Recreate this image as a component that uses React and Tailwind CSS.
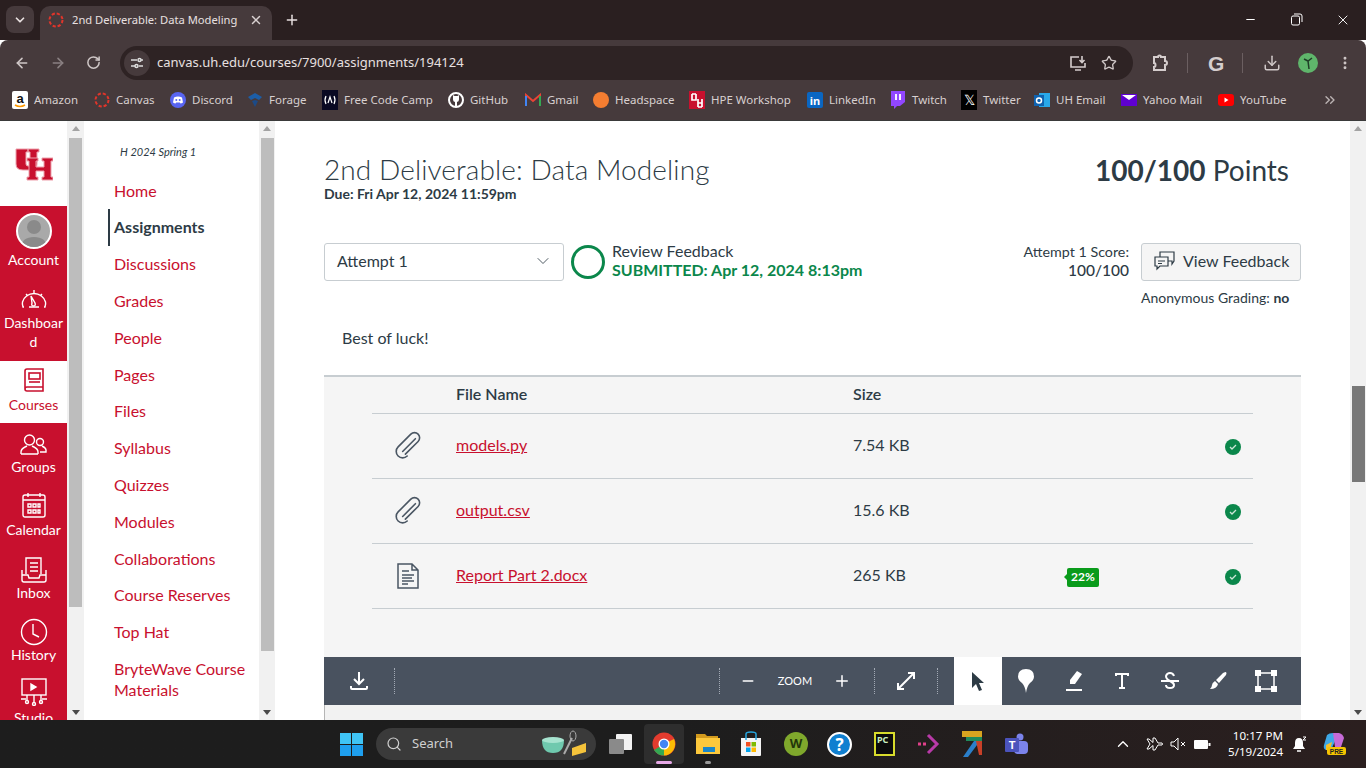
import React from "react";
import { ArrowLeft, ArrowRight, RotateCw, Star, Download, X, Plus, ChevronDown, ChevronsRight, ChevronUp, Search, Minus, EllipsisVertical } from "lucide-react";

const Canvas = ({ s = 16 }) => (
  <svg width={s} height={s} viewBox="0 0 16 16" className="shrink-0">
    <circle cx="8" cy="8" r="6.5" fill="none" stroke="#e0352b" strokeWidth="2" strokeDasharray="3.2 1.9" />
  </svg>
);

const Clip = () => (
  <svg width="36" height="36" viewBox="0 0 28 28" fill="none" stroke="#4a5663" strokeWidth="1.250" strokeLinecap="round">
    <g transform="translate(1.5 0) rotate(45 14 14)">
      <path d="M17 9v14M17 9a4 4 0 0 0-8 0v14a5 5 0 0 0 10 0" transform="translate(-1 -2)" />
      <path d="M13 9v14" transform="translate(0 -2)" />
    </g>
  </svg>
);

const bookmarks = [
  { w: "w-[82px]", t: "Amazon", i: <svg width="16" height="18" viewBox="0 0 16 18"><rect width="16" height="18" rx="2" fill="#fff" /><text x="8" y="12" fontSize="13" fontWeight="700" textAnchor="middle" fill="#111" fontFamily="Liberation Sans">a</text><path d="M3 14q5 3 10 0" stroke="#f90" strokeWidth="1.6" fill="none" /></svg> },
  { w: "w-[76px]", t: "Canvas", i: <Canvas /> },
  { w: "w-[77px]", t: "Discord", i: <svg width="16" height="16" viewBox="0 0 16 16"><circle cx="8" cy="8" r="8" fill="#5865f2" /><path d="M4 5.5q4-1.800 8 0l1 5q-1.500 1-2.500 1l-.7-1h-3.600l-.7 1q-1 0-2.500-1z" fill="#fff" /><circle cx="6.300" cy="8" r="1" fill="#5865f2" /><circle cx="9.700" cy="8" r="1" fill="#5865f2" /></svg> },
  { w: "w-[75px]", t: "Forage", i: <svg width="16" height="16" viewBox="0 0 16 16"><path d="M1 5l7-4 7 4-3 3-4-2-4 2z" fill="#1c5ea8" /><path d="M5 9l3-1 3 1-3 6z" fill="#1c4a86" /></svg> },
  { w: "w-[126px]", t: "Free Code Camp", i: <svg width="16" height="20" viewBox="0 0 16 20"><rect width="16" height="20" fill="#0a0a23" /><path d="M4 6q-2 4 0 8M12 6q2 4 0 8M6 13l2-6 2 6" stroke="#fff" fill="none" strokeWidth="1.200" /></svg> },
  { w: "w-[77px]", t: "GitHub", i: <svg width="16" height="16" viewBox="0 0 16 16"><circle cx="8" cy="8" r="7" fill="none" stroke="#fff" strokeWidth="2" /><path d="M5 3l1.500 1h3L11 3v4.500q0 2-2 2.500v4H7v-4q-2-.5-2-2.500z" fill="#fff" /></svg> },
  { w: "w-[68px]", t: "Gmail", i: <svg width="16" height="14" viewBox="0 0 16 14"><path d="M1 13V2l7 6 7-6v11" fill="none" stroke="#ea4335" strokeWidth="2" /><path d="M1 13V3" stroke="#4285f4" strokeWidth="2" /><path d="M15 13V3" stroke="#34a853" strokeWidth="2" /></svg> },
  { w: "w-[96px]", t: "Headspace", i: <span className="block h-4 w-4 rounded-full bg-[#f47d31]" /> },
  { w: "w-[118px]", t: "HPE Workshop", i: <svg width="16" height="18" viewBox="0 0 16 18"><rect width="16" height="18" fill="#c8102e" /><path d="M3 3v6h4V3M9 8v8M13 8v8M9 12h4M3 3h4M9 16h4" stroke="#fff" strokeWidth="1.700" fill="none" /></svg> },
  { w: "w-[83px]", t: "LinkedIn", i: <span className="flex h-4 w-4 items-center justify-center rounded-[2px] bg-[#0a66c2] text-[11px] font-bold leading-none text-white">in</span> },
  { w: "w-[71px]", t: "Twitch", i: <svg width="16" height="20" viewBox="0 0 16 20"><path d="M1 1h14v11l-5 4H7l-3 3v-3H1z" fill="#9146ff" /><path d="M6 4v6M10 4v6" stroke="#fff" strokeWidth="1.800" /></svg> },
  { w: "w-[73px]", t: "Twitter", i: <span className="flex h-5 w-4 items-center justify-center bg-black text-[14px] leading-none text-white">𝕏</span> },
  { w: "w-[87px]", t: "UH Email", i: <svg width="16" height="20" viewBox="0 0 16 20"><rect x="5" y="3" width="11" height="14" fill="#28a8ea" /><rect y="5" width="10" height="11" fill="#0f62b0" /><circle cx="5" cy="10.500" r="2.500" fill="none" stroke="#fff" strokeWidth="1.500" /></svg> },
  { w: "w-[97px]", t: "Yahoo Mail", i: <svg width="16" height="14" viewBox="0 0 16 14"><rect y="1" width="16" height="12" fill="#5f01d1" /><path d="M1 2l7 5 7-5z" fill="#fff" /></svg> },
  { w: "w-[94px]", t: "YouTube", i: <svg width="16" height="14" viewBox="0 0 16 14"><rect y="1" width="16" height="12" rx="3" fill="#f00" /><path d="M6.500 4.500L10.500 7l-4 2.500z" fill="#fff" /></svg> },
];

function TabStrip() {
  return (
    <div className="flex h-10 items-start bg-[#2a1f20] text-[#e8e0e0]">
      <div className="ml-[6px] mt-[6px] flex h-[27px] w-[28px] items-center justify-center rounded-lg bg-[#463a3c]">
        <ChevronDown size={14} strokeWidth={3} />
      </div>
      <div className="ml-[6px] mt-[6px] flex h-[34px] w-[232px] items-center rounded-t-[10px] bg-[#463a3c] pb-[6px] pl-2 pr-2">
        <Canvas />
        <span className="ml-2 whitespace-nowrap text-[11.200px]">2nd Deliverable: Data Modeling</span>
        <X size={14} strokeWidth={2.5} className="ml-auto mr-[1px] text-[#d8d0d0]" />
      </div>
      <Plus size={16} strokeWidth={2.2} className="ml-3 mt-3" />
      <div className="ml-auto flex">
        <div className="mt-[13px] flex w-[45px] justify-center"><Minus size={13} className="text-white" /></div>
        <div className="mt-[13px] flex w-[46px] justify-center">
          <svg width="13" height="13" viewBox="0 0 13 13" fill="none" stroke="#fff"><rect x="1.500" y="3" width="8" height="9" rx="1.500" /><path d="M4 1h6q2 0 2 2v6" /></svg>
        </div>
        <div className="mt-[12px] flex w-[47px] justify-center"><X size={16} strokeWidth={1.4} className="text-white" /></div>
      </div>
    </div>
  );
}

function Toolbar() {
  return (
    <div className="flex h-10 items-center rounded-t-lg bg-[#463a3c] pt-[6px] text-[#cfc7c7]">
      <div className="flex w-[120px] pl-[14px]">
        <ArrowLeft size={16} strokeWidth={2.4} />
        <ArrowRight size={16} strokeWidth={2.4} className="ml-5 text-[#8a8082]" />
        <RotateCw size={15} strokeWidth={2.4} className="ml-5" />
      </div>
      <div className="flex h-[34px] w-[1013px] items-center rounded-full bg-[#2e2324] pl-1 pr-4">
        <div className="flex h-[26px] w-[26px] items-center justify-center rounded-full bg-[#463a3c]">
          <svg width="14" height="14" viewBox="0 0 14 14" fill="none" stroke="#ddd" strokeWidth="1.500"><path d="M1 4h6M1 10h4M11 4h2M9 10h4" /><circle cx="9.500" cy="4" r="1.500" /><circle cx="6.500" cy="10" r="1.500" /></svg>
        </div>
        <span className="ml-[7px] text-[13px] text-[#e8e0e0]">canvas.uh.edu/courses/7900/assignments/194124</span>
        <div className="ml-auto flex items-center gap-[14px]">
          <svg width="18" height="18" viewBox="0 0 18 18" fill="none" stroke="#d5cdcd" strokeWidth="1.600"><path d="M10 3H2v10h14V9M6 16h6M13 2v6M10.500 6l2.500 2.500L15.500 6" /></svg>
          <Star size={16} strokeWidth={2} />
        </div>
      </div>
      <div className="flex items-center">
        <div className="ml-[18px] flex w-[18px] justify-center">
          <svg width="18" height="18" viewBox="0 0 18 18" fill="none" stroke="#d5cdcd" strokeWidth="2"><path d="M3 3h4q0-1.500 1.500-1.500T10 3h4v4q2 0 2 2t-2 2v5H3v-3q1.500 0 1.500-2T3 9z" /></svg>
        </div>
        <div className="ml-[18px] h-5 w-[1px] bg-[#6b5f61]" />
        <span className="ml-[20px] w-[18px] text-[21px] font-bold leading-none text-[#d5cdcd] [font-family:'Liberation_Sans',sans-serif]">G</span>
        <div className="ml-[16px] h-5 w-[1px] bg-[#6b5f61]" />
        <Download size={18} strokeWidth={2} className="ml-[20px]" />
        <div className="ml-[17px] flex h-[20px] w-[20px] items-center justify-center rounded-full bg-[#5fb56b]">
          <svg width="12" height="14" viewBox="0 0 12 14" fill="none" stroke="#1f3d27" strokeWidth="1.500"><path d="M2 3l4 2 4-3M6 5l1 8" /></svg>
        </div>
        <EllipsisVertical size={16} strokeWidth={2.4} className="ml-[19px]" />
      </div>
    </div>
  );
}

function Bookmarks() {
  return (
    <div className="flex h-10 items-center bg-[#463a3c] pl-3 text-[11.500px] text-[#d8d0d0]">
      {bookmarks.map((b) => (
        <div key={b.t} className={"flex items-center gap-[6px] whitespace-nowrap " + b.w}>
          <span className="flex w-4 shrink-0 items-center justify-center">{b.i}</span>
          <span>{b.t}</span>
        </div>
      ))}
      <ChevronsRight size={16} className="ml-[10px] text-[#bcb4b4]" />
    </div>
  );
}

const NavItem = ({ h, red, icon, children }) => (
  <div className={"flex shrink-0 flex-col items-center text-center text-[14px] leading-[19px] " + h + " " + (red ? "bg-[#c8102e] text-white" : "bg-white text-[#c8102e]")}>
    {icon}
    <span>{children}</span>
  </div>
);

const ScrollBar = ({ w, thumbTop, thumbH, bottomCls }) => (
  <div className={"flex shrink-0 flex-col items-center bg-[#f1f1f1] " + w}>
    <div className={"flex w-full justify-center " + thumbTop}>
      <div className="mt-[5px] h-0 w-0 border-x-[4px] border-b-[5px] border-x-transparent border-b-[#a3a3a3]" />
    </div>
    <div className={"w-[13px] " + thumbH} />
    <div className={"mt-auto mb-[5px] h-0 w-0 border-x-[4px] border-t-[5px] border-x-transparent " + bottomCls} />
  </div>
);

function GlobalNav() {
  const stroke = { fill: "none", stroke: "#fff", strokeWidth: 1.4 };
  const red = { fill: "none", stroke: "#c8102e", strokeWidth: 1.6 };
  return (
    <div className="flex h-full w-[67px] shrink-0 flex-col overflow-hidden">
      <div className="flex h-[85px] shrink-0 items-start justify-center bg-white pt-[26px]">
        <svg width="38" height="34" viewBox="0 0 38 34">
          <g fill="#c8102e" stroke="#eda0ac" strokeWidth="1">
            <path d="M1 2h12v3h-2v12q0 2 2 2h2V5h-2V2h11v3h-2v12q0 6-6 6h-8q-7 0-7-6V5H1z" />
            <path d="M12 11h11v3h-2v6h8v-6h-2v-3h11v3h-2v16h2v3H27v-3h2v-6h-8v6h2v3H12v-3h2V14h-2z" />
          </g>
        </svg>
      </div>
      <NavItem h="h-[67px]" red icon={
        <div className="mt-[7px] mb-[1px] flex h-9 w-9 items-end justify-center overflow-hidden rounded-full border-2 border-white bg-[#a9a9a9]">
          <svg width="32" height="32" viewBox="0 0 32 32"><circle cx="16" cy="12" r="7" fill="#8a8a8a" /><path d="M3 32q1-10 13-10t13 10z" fill="#8a8a8a" /></svg>
        </div>}>Account</NavItem>
      <NavItem h="h-[88px]" red icon={
        <svg className="mt-[16px] mb-[4px]" width="26" height="20" viewBox="0 0 26 20" {...stroke}><path d="M3 18H2q-1-3-.5-5a12 12 0 0 1 23 0q.5 2-.5 5h-1M13 1v3M5 5l2 2M21 5l-2 2M8 18h10" /><path d="M10 7l4 7q1 3-1.500 3T11 14z" /></svg>}>Dashboar<br />d</NavItem>
      <NavItem h="h-[62px]" icon={
        <svg className="mt-[7px] mb-[3px]" width="22" height="24" viewBox="0 0 22 24" {...red}><path d="M4 1h16v18H4q-2 0-2 2t2 2h16v-4M2 21V3q0-2 2-2" /><rect x="6" y="5" width="11" height="6" /><path d="M6 14h11" /></svg>}>Courses</NavItem>
      <NavItem h="h-[63px]" red icon={
        <svg className="mt-[11px] mb-[2px]" width="27" height="21" viewBox="0 0 27 21" {...stroke}><circle cx="9.500" cy="6" r="5" /><path d="M1 20v-2q0-3 4-5l2-1M18 20H1M18 20v-2q0-3-4-5l-2-1" /><circle cx="20" cy="8" r="3.500" /><path d="M20 18h6v-2q0-2-4-4" /></svg>}>Groups</NavItem>
      <NavItem h="h-[63px]" red icon={
        <svg className="mt-[6px] mb-[2px]" width="24" height="26" viewBox="0 0 24 26" {...stroke}><rect x="1" y="3" width="22" height="22" rx="2" /><path d="M1 8h22M6 1v4M18 1v4" /><path d="M6 12h3v3H6zM11 12h3v3h-3zM16 12h2v3h-2zM6 18h3v3H6zM11 18h3v3h-3zM16 18h2v3h-2z" /></svg>}>Calendar</NavItem>
      <NavItem h="h-[63px]" red icon={
        <svg className="mt-[8px] mb-0" width="26" height="26" viewBox="0 0 26 26" {...stroke}><path d="M5 17V1h15v16M9 6h8M9 10h8M9 14h8M1 13v10q0 2 2 2h20q2 0 2-2V13M1 18h6l1 3h10l1-3h6" /></svg>}>Inbox</NavItem>
      <NavItem h="h-[62px]" red icon={
        <svg className="mt-[6px] -mb-[1px]" width="28" height="28" viewBox="0 0 28 28" {...stroke}><circle cx="14" cy="14" r="12.500" /><path d="M13 6v10l6 3" /></svg>}>History</NavItem>
      <NavItem h="h-[60px]" red icon={
        <svg className="mt-[4px] mb-[2px]" width="28" height="28" viewBox="0 0 28 28" {...stroke}><rect x="2" y="1" width="24" height="16" /><path d="M11 6l5 3-5 3z" fill="#fff" /><path d="M7 17v5M14 17v7M21 17v5M1 21h5M22 21h5" /><circle cx="7" cy="24" r="1.500" /><circle cx="14" cy="26" r="1.500" /><circle cx="21" cy="24" r="1.500" /></svg>}>Studio</NavItem>
    </div>
  );
}

const courseItems = ["Home", "Assignments", "Discussions", "Grades", "People", "Pages", "Files", "Syllabus", "Quizzes", "Modules", "Collaborations", "Course Reserves", "Top Hat"];

function CourseNav() {
  return (
    <div className="flex h-full w-[175px] shrink-0 flex-col bg-white pl-6 text-[16px]">
      <div className="h-[51.200px] shrink-0 pl-3 pt-[24px] text-[11px] italic leading-[14px] text-[#2d3b45]">H 2024 Spring 1</div>
      {courseItems.map((c) => (
        <div key={c} className={"flex h-[36.800px] shrink-0 items-center border-l-2 pl-[4px] " + (c === "Assignments" ? "border-[#2d3b45] font-bold text-[#2d3b45]" : "border-transparent text-[#c8102e]")}>{c}</div>
      ))}
      <div className="ml-[2px] mt-[7.800px] pl-[4px] leading-[21px] text-[#c8102e]">BryteWave Course<br />Materials</div>
    </div>
  );
}

function FileRow({ icon, name, size, badge }) {
  return (
    <div className="flex h-[65px] items-center border-b border-[#c7cdd1] pr-3">
      <div className="flex w-[84px] justify-center pr-3">{icon}</div>
      <a className="mb-[2px] w-[397px] text-[16px] text-[#c8102e] underline">{name}</a>
      <span className="mb-[2px] w-[212px] text-[16px]">{size}</span>
      <div className="mt-[2px] w-[160px]">
        {badge && (
          <div className="relative ml-[2px] flex h-[19px] w-[32px] items-center justify-center rounded-[2px] bg-[#0a9b1b] text-[12px] font-bold text-white">
            22%
            <span className="absolute -left-[3px] top-[6px] h-0 w-0 border-y-[3px] border-r-[3px] border-y-transparent border-r-[#0a9b1b]" />
          </div>
        )}
      </div>
      <span className="mt-[2px] flex h-4 w-4 items-center justify-center rounded-full bg-[#0b874b]">
        <svg width="8" height="8" viewBox="0 0 8 8" fill="none" stroke="#cde5d8" strokeWidth="1.300"><path d="M1 4l2 2 4-4" /></svg>
      </span>
    </div>
  );
}

const Sep = ({ ml = "" }) => <div className={"h-[26px] w-0 border-l border-dotted border-[#a3aab5] " + ml} />;

function AnnotationBar() {
  const w = { fill: "#fff" };
  return (
    <div className="flex h-12 shrink-0 items-center bg-[#49525f] text-white">
      <div className="flex w-[70px] justify-center">
        <svg width="18" height="20" viewBox="0 0 18 20" fill="none" stroke="#fff" strokeWidth="2"><path d="M9 1v11M4 8l5 5 5-5M1 15v2q0 1 1 1h14q1 0 1-1v-2" /></svg>
      </div>
      <Sep />
      <div className="w-[324px]" />
      <Sep />
      <div className="flex w-[56px] justify-center"><Minus size={16} strokeWidth={2.5} /></div>
      <span className="w-[38px] text-center text-[11px]">ZOOM</span>
      <div className="flex w-[56px] justify-center"><Plus size={18} strokeWidth={2} /></div>
      <Sep ml="ml-[4px]" />
      <div className="flex w-[62px] justify-center">
        <svg width="20" height="20" viewBox="0 0 20 20" fill="none" stroke="#fff" strokeWidth="2"><path d="M2 18L18 2M12 2h6v6M2 12v6h6" /></svg>
      </div>
      <Sep />
      <div className="ml-4 flex h-full w-12 items-center justify-center bg-white">
        <svg width="14" height="20" viewBox="0 0 14 20" fill="#2d3b45"><path d="M1 1l12 11H8l3 7-3 1-3-7-4 4z" /></svg>
      </div>
      <div className="flex w-12 justify-center">
        <svg width="18" height="26" viewBox="0 0 18 26" {...w}><path d="M9 25q-1-7-4-10Q1 12 1 8.500 1 1 9 1t8 7.500q0 3.500-4 6.500-3 3-4 10z" /></svg>
      </div>
      <div className="flex w-12 justify-center">
        <svg width="20" height="22" viewBox="0 0 20 22"><path d="M13 1l5 3-7 10H6v-4z" fill="#fff" /><path d="M2 20h16" stroke="#fff" strokeWidth="2" /></svg>
      </div>
      <div className="flex w-12 justify-center">
        <svg width="16" height="18" viewBox="0 0 16 18" fill="none" stroke="#fff" strokeWidth="2"><path d="M2 4V2h12v2M8 2v14M5 16h6" /></svg>
      </div>
      <div className="flex w-12 justify-center">
        <svg width="20" height="20" viewBox="0 0 20 20" fill="none" stroke="#fff" strokeWidth="2"><path d="M1 10h18M14 5q-1-3-4-3T6 5q0 3 4 5t4 4q0 3-4 3t-4-3" /></svg>
      </div>
      <div className="flex w-12 justify-center">
        <svg width="20" height="20" viewBox="0 0 20 20" fill="#fff"><path d="M18 1q1 1 0 3l-7 8-3-3 7-7q2-1 3-1zM7 10l3 3q-1 5-8 5 2-2 2-4t3-4z" /></svg>
      </div>
      <div className="flex w-12 justify-center">
        <svg width="22" height="22" viewBox="0 0 22 22"><rect x="3" y="3" width="16" height="16" fill="none" stroke="#fff" strokeWidth="1.500" /><path d="M0 0h6v6H0zM16 0h6v6h-6zM0 16h6v6H0zM16 16h6v6h-6z" fill="#fff" /></svg>
      </div>
    </div>
  );
}

function Main() {
  return (
    <div className="flex h-full min-w-0 flex-1 flex-col overflow-hidden bg-white pl-[49px] pr-[49px] text-[#2d3b45]">
      <div className="flex h-[91px] shrink-0 items-start justify-between pt-[30px]">
        <div>
          <h1 className="-mt-[1px] text-[28px] font-light leading-[38px] tracking-[0.1px]">2nd Deliverable: Data Modeling</h1>
          <div className="-mt-[2px] text-[14px] font-bold leading-[16px]">Due: Fri Apr 12, 2024 11:59pm</div>
        </div>
        <div className="mr-3 text-[28px] leading-[38px]"><b>100/100</b> Points</div>
      </div>
      <div className="mt-[31px] flex h-[38px] shrink-0 items-center">
        <div className="flex h-[38px] w-[240px] items-center justify-between rounded-[3px] border border-[#c7cdd1] pb-[2px] pl-3 pr-[10px] text-[16px]">
          Attempt 1
          <ChevronDown size={20} strokeWidth={1} />
        </div>
        <div className="ml-[7px] h-[34px] w-[34px] rounded-full border-[3px] border-[#0b874b]" />
        <div className="mb-[4px] ml-[7px]">
          <div className="text-[16px] leading-[19px]">Review Feedback</div>
          <div className="text-[16px] font-bold leading-[19px] text-[#0b874b]">SUBMITTED: Apr 12, 2024 8:13pm</div>
        </div>
        <div className="mb-[2px] ml-auto mr-3 text-right">
          <div className="text-[14.300px] leading-[18px]">Attempt 1 Score:</div>
          <div className="text-[15.500px] font-medium leading-[18px]">100/100</div>
        </div>
        <div className="flex h-[38px] w-[160px] items-center gap-2 rounded-[3px] border border-[#c7cdd1] bg-[#f5f5f5] pb-[2px] pl-3 text-[16px]">
          <svg width="21" height="20" viewBox="0 0 21 20" fill="none" stroke="#2d3b45" strokeWidth="1.200"><path d="M1 6h13v9H6l-3 3v-3H1zM6 6V1h14v9l-2 3v-3h-4M4 10h7M4 12.500h4" /></svg>
          View Feedback
        </div>
      </div>
      <div className="mt-[8px] flex shrink-0 justify-end pr-3">
        <div className="w-[148px] whitespace-nowrap text-[14px] leading-[18px]">Anonymous Grading: <b>no</b></div>
      </div>
      <p className="mt-[19px] h-[27px] shrink-0 pl-[18px] text-[16px] leading-[24px]">Best of luck!</p>
      <div className="mt-[22px] shrink-0 border-t-2 border-[#c7cdd1] bg-[#f5f5f5] px-12 pb-[48px]">
        <div className="flex h-[37px] items-center border-b border-[#c7cdd1] pb-[2px] text-[16px] font-bold">
          <span className="ml-[84px] w-[397px] font-semibold">File Name</span>
          <span className="font-semibold">Size</span>
        </div>
        <FileRow name="models.py" size="7.54 KB" icon={<Clip />} />
        <FileRow name="output.csv" size="15.6 KB" icon={<Clip />} />
        <FileRow name="Report Part 2.docx" size="265 KB" badge icon={
          <svg width="22" height="26" viewBox="0 0 22 26" fill="none" stroke="#4a5663" strokeWidth="1.500"><path d="M1 1h14l6 6v18H1zM15 1v6h6" /><path d="M5 8h7M5 12h12M5 15h10M5 18h12M5 21h6" /></svg>} />
      </div>
      <AnnotationBar />
      <div className="flex-1 border-l border-[#b5b5b5] bg-[#f2f2f2]" />
    </div>
  );
}

function Taskbar() {
  return (
    <div className="flex h-12 items-center bg-gradient-to-r from-[#1d1d1d] via-[#1d1d1d] to-[#2b1f1f] text-white">
      <div className="ml-[340px] grid h-[23px] w-[23px] grid-cols-2 gap-[1px]">
        <span className="bg-[#3fc4f5]" /><span className="bg-[#3fc4f5]" /><span className="bg-[#1e9fee]" /><span className="bg-[#1e9fee]" />
      </div>
      <div className="ml-[13px] flex h-[32px] w-[220px] items-center rounded-full bg-[#3a3a3a] pl-[10px] text-[13px] text-[#d0d0d0]">
        <Search size={16} strokeWidth={1.800} />
        <span className="ml-[10px]">Search</span>
        <svg className="ml-auto mr-1" width="52" height="28" viewBox="0 0 52 28"><path d="M2 10h22q0 13-11 13T2 10z" fill="#6fc9ae" /><ellipse cx="13" cy="10" rx="11" ry="3" fill="#a6e3cf" /><path d="M24 24l8-16" stroke="#aaa" strokeWidth="2" /><ellipse cx="33" cy="6" rx="3" ry="5" fill="none" stroke="#aaa" /><path d="M32 18l14-5v9l-14 4z" fill="#f5c33b" /></svg>
      </div>
      <div className="ml-[13px] flex w-[23px] items-center">
        <svg width="23" height="20" viewBox="0 0 23 20"><rect x="7" width="16" height="16" rx="1" fill="#f2f2f2" /><rect y="5" width="15" height="15" rx="1" fill="#8a8a8a" /></svg>
      </div>
      <div className="relative ml-[12px] flex h-[40px] w-[40px] items-center justify-center rounded bg-[#2e2e2e]">
        <svg width="24" height="24" viewBox="0 0 24 24"><circle cx="12" cy="12" r="11.500" fill="#e33b2e" /><path d="M12 12L2 18a11.500 11.500 0 0 0 10 5.500z" fill="#34a853" /><path d="M12 12l10-5a11.500 11.500 0 0 1-10 16.500z" fill="#fbbc05" /><circle cx="12" cy="12" r="5.500" fill="#fff" /><circle cx="12" cy="12" r="4.200" fill="#4285f4" /></svg>
        <span className="absolute bottom-0 left-[12px] h-[3px] w-4 rounded-full bg-[#e6a8e6]" />
      </div>
      <div className="relative ml-[12px] flex w-[24px] justify-center">
        <svg width="24" height="24" viewBox="0 0 24 24"><path d="M0 2h9l2 2h11v4H0z" fill="#d29a1e" /><rect y="6" width="24" height="16" fill="#fcc83c" /><rect x="7" y="15" width="12" height="5" fill="#1a86c8" /></svg>
        <span className="absolute -bottom-[8px] left-[9px] h-[3px] w-[6px] rounded-full bg-[#9a9a9a]" />
      </div>
      <div className="ml-[19px] flex w-[24px] justify-center">
        <svg width="24" height="26" viewBox="0 0 24 26"><path d="M2 7h20v17q0 1-1 1H3q-1 0-1-1z" fill="#f4f4f4" /><path d="M7 9V3q0-2 5-2t5 2v6" fill="none" stroke="#27a7e0" strokeWidth="1.500" /><rect x="7" y="11" width="4.500" height="4.500" fill="#f25022" /><rect x="12.500" y="11" width="4.500" height="4.500" fill="#7fba00" /><rect x="7" y="16.500" width="4.500" height="4.500" fill="#00a4ef" /><rect x="12.500" y="16.500" width="4.500" height="4.500" fill="#ffb900" /></svg>
      </div>
      <div className="ml-[21px] flex h-6 w-6 items-center justify-center rounded-full bg-[#7fa82c] text-[13px] font-bold text-[#23360a]">W</div>
      <div className="ml-[19px] flex h-[25px] w-[25px] items-center justify-center rounded-full border-2 border-white bg-[#0f7fd0] text-[17px] font-bold leading-none">?</div>
      <div className="ml-[22px] flex h-[24px] w-[21px] items-start bg-[#0c0c0c] pl-[3px] pt-[3px] text-[9px] font-bold leading-none text-[#c8f0c0] ring-2 ring-inset ring-[#d8dc2c]">PC</div>
      <div className="ml-[22px] flex w-[24px]">
        <svg width="24" height="22" viewBox="0 0 24 22" fill="none" stroke="#b83aa8" strokeWidth="3"><path d="M11 2l9 9-9 9" /><path d="M1 11h8" strokeDasharray="3 2" stroke="#e0408a" /></svg>
      </div>
      <div className="ml-[21px] flex w-[20px]">
        <svg width="20" height="26" viewBox="0 0 20 26"><rect width="20" height="6" fill="#d8a420" /><rect x="4" y="6" width="16" height="4" fill="#1f8a5c" /><path d="M12 10h6L6 26H1z" fill="#2b7fc9" /><path d="M14 10h6v14h-3z" fill="#c84028" /></svg>
      </div>
      <div className="ml-[23px] flex w-[24px]">
        <svg width="24" height="24" viewBox="0 0 24 24"><circle cx="15" cy="5" r="3.500" fill="#7b83eb" /><rect x="9" y="9" width="14" height="13" rx="4" fill="#7b83eb" /><rect x="0" y="6" width="14" height="14" rx="1" fill="#4b53bc" /><text x="7" y="16.500" textAnchor="middle" fontSize="11" fontWeight="700" fill="#fff" fontFamily="Liberation Sans">T</text></svg>
      </div>
      <ChevronUp size={18} strokeWidth={1.800} className="ml-[85px]" />
      <svg className="ml-[14px]" width="18" height="16" viewBox="0 0 18 16" fill="none" stroke="#fff"><path d="M1 3l3 5-3 5h2l4-3.500V14h2l3-5h4q1-1 0-2h-4L9 2H7v4.500L3 3z" /></svg>
      <svg className="ml-[6px]" width="16" height="14" viewBox="0 0 16 14" fill="none" stroke="#fff"><path d="M1 5v4h3l4 4V1L4 5zM11 5l4 4M15 5l-4 4" /></svg>
      <svg className="ml-[7px]" width="18" height="14" viewBox="0 0 18 14"><rect x="1" y="3" width="14" height="9" rx="1" fill="#fff" /><rect x="15.500" y="6" width="2" height="3" fill="#fff" /></svg>
      <div className="ml-[17px] w-[55px] whitespace-nowrap text-right text-[11.600px] leading-[16px]">10:17 PM<br />5/19/2024</div>
      <svg className="ml-[9px]" width="15" height="17" viewBox="0 0 15 17"><path d="M7 2q4 0 4 5v3l2 3H1l2-3V7q0-5 4-5z" fill="#fff" /><path d="M5 15h4" stroke="#fff" strokeWidth="1.500" /><path d="M11 1h3l-3 3h3" fill="none" stroke="#fff" /></svg>
      <svg className="ml-[15px]" width="24" height="24" viewBox="0 0 24 24"><path d="M5 3q2-2 6-2l3 6-5 11H4q-3-1-2-5z" fill="#3ea8e6" /><path d="M11 1h6q4 1 5 5l-3 9-6 0z" fill="#c66bd8" /><path d="M4 13l6-3-2 8H4z" fill="#f3c02f" /><rect x="5" y="15" width="19" height="8" rx="2" fill="#f5c400" /><text x="14.500" y="21.500" textAnchor="middle" fontSize="6.500" fontWeight="700" fill="#222" fontFamily="Liberation Sans">PRE</text></svg>
    </div>
  );
}

export default function App() {
  return (
    <div className="flex h-[768px] w-[1366px] flex-col overflow-hidden bg-white [font-family:'Noto_Sans',sans-serif]">
      <TabStrip />
      <Toolbar />
      <Bookmarks />
      <div className="flex h-[600px] border-t border-[#3a3a3a] [font-family:Lato,sans-serif]">
        <GlobalNav />
        <ScrollBar w="w-[17px]" thumbTop="h-[17px]" thumbH="h-[469px] bg-[#bdbdbd]" bottomCls="border-t-[#4a4a4a]" />
        <CourseNav />
        <ScrollBar w="w-[16px]" thumbTop="h-[17px]" thumbH="h-[513px] bg-[#bdbdbd]" bottomCls="border-t-[#4a4a4a]" />
        <Main />
        <ScrollBar w="w-[16px]" thumbTop="h-[265px]" thumbH="h-[96px] bg-[#787878]" bottomCls="border-t-[#4a4a4a]" />
      </div>
      <Taskbar />
    </div>
  );
}
